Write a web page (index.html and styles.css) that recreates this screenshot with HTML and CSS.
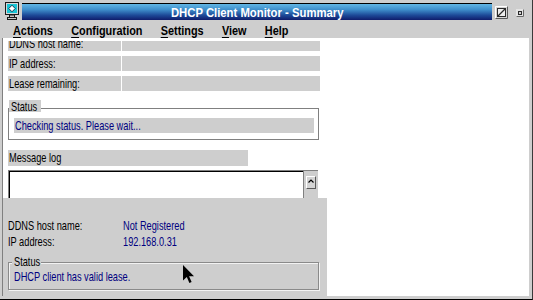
FILE: index.html
```html
<!DOCTYPE html>
<html lang="en">
<head>
    <meta charset="UTF-8">
    <title>DHCP Client Monitor - Summary</title>
    <link rel="stylesheet" href="styles.css">
</head>
<body>
    <div class="window">
        <div class="titlebar">
            <svg class="sys-icon" width="14" height="18" viewBox="0 0 14 18">
                <rect x="0.5" y="0.5" width="13" height="12" fill="#d6d6d6" stroke="#1a1a1a"/>
                <rect x="2" y="2" width="10" height="9" fill="#18c4d4"/>
                <path d="M7 3.2 L10.2 6.5 L7 9.8 L3.8 6.5 Z" fill="#fff" stroke="#0c3048" stroke-width="0.9"/>
                <rect x="4.5" y="13" width="5" height="3" fill="#c8c8c8" stroke="#1a1a1a"/>
                <rect x="2.5" y="15.5" width="9" height="2" fill="#c8c8c8" stroke="#1a1a1a"/>
            </svg>
            <div class="caption"><span>DHCP Client Monitor - Summary</span></div>
            <svg class="btn-max" width="13" height="13" viewBox="0 0 13 13">
                <rect width="13" height="13" fill="#d4d4d4"/>
                <path d="M0.5 12.5 V0.5 H12.5" fill="none" stroke="#fff"/>
                <path d="M0.5 12.5 H12.5 V0.5" fill="none" stroke="#5a5a5a"/>
                <rect x="2.5" y="2.5" width="8" height="8" fill="#eeeeee" stroke="#2a2a2a"/>
                <line x1="3" y1="10" x2="10" y2="3" stroke="#2a2a2a" stroke-width="1.3"/>
            </svg>
            <svg class="btn-restore" width="8" height="8" viewBox="0 0 8 8">
                <rect width="8" height="8" fill="#e4e4e4"/>
                <path d="M0.5 7.5 H7.5 V0.5" fill="none" stroke="#6a6a6a"/>
                <rect x="2.5" y="2.5" width="3" height="3" fill="#d0d0d0" stroke="#2a2a2a"/>
            </svg>
        </div>

        <div class="menubar">
            <div class="menu-items">
                <span><u>A</u>ctions</span>
                <span><u>C</u>onfiguration</span>
                <span><u>S</u>ettings</span>
                <span><u>V</u>iew</span>
                <span><u>H</u>elp</span>
            </div>
        </div>

        <div class="client">
            <div class="form">
                <div class="fields">
                    <div class="field-row">
                        <div class="field-label"><span class="t">DDNS host name:</span></div>
                        <div class="field-value"></div>
                    </div>
                    <div class="field-row">
                        <div class="field-label"><span class="t">IP address:</span></div>
                        <div class="field-value"></div>
                    </div>
                    <div class="field-row">
                        <div class="field-label"><span class="t">Lease remaining:</span></div>
                        <div class="field-value"></div>
                    </div>
                </div>

                <div class="group">
                    <div class="group-title"><span class="t">Status</span></div>
                    <div class="group-box">
                        <div class="status-line"><span class="t">Checking status. Please wait...</span></div>
                    </div>
                </div>

                <div class="log-label"><span class="t">Message log</span></div>
                <div class="log-box">
                    <div class="log-text"></div>
                    <div class="vscroll">
                        <div class="arrow-up">
                            <svg width="6" height="4" viewBox="0 0 6 4"><path d="M0.5 3.5 L3 1 L5.5 3.5" fill="none" stroke="#000" stroke-width="1.2"/></svg>
                        </div>
                    </div>
                </div>
            </div>

            <!-- summary popup sits over the main form -->
            <div class="summary">
                <dl class="info">
                    <dt><span class="t">DDNS host name:</span></dt>
                    <dd><span class="t">Not Registered</span></dd>
                    <dt><span class="t">IP address:</span></dt>
                    <dd><span class="t">192.168.0.31</span></dd>
                </dl>
                <div class="group">
                    <div class="group-title"><span class="t">Status</span></div>
                    <div class="group-box">
                        <div class="status-line"><span class="t">DHCP client has valid lease.</span></div>
                    </div>
                </div>
            </div>

            <svg class="pointer" width="12" height="19" viewBox="0 0 12 19">
                <path d="M0 0 V15.5 L3.8 12 L6.4 18 L8.6 17 L6.1 11.2 H11 Z" fill="#000"/>
            </svg>
        </div>
    </div>
</body>
</html>
```

FILE: styles.css
```css
* { box-sizing: border-box; }

body { margin: 0; font-family: "Liberation Sans", Arial, sans-serif; font-size: 13px; color: #000; background: #fff; }

/* narrow system font look */
.t { display: inline-block; white-space: nowrap; transform: scaleX(.71); transform-origin: 0 50%; }

.window {
    width: 533px;
    height: 300px;
    display: flex;
    flex-direction: column;
    background: #cecece;
    border-right: 1px solid #3a3a3a;
    border-bottom: 1px solid #000;
}

/* title bar */
.titlebar { display: flex; height: 21px; flex: none; }
.sys-icon { margin: 2px 0 0 5px; flex: none; }
.caption {
    width: 470px;
    height: 17px;
    margin: 3px 0 0 3px;
    padding-top: 1px;
    border-top: 1px solid #000;
    background: linear-gradient(#62b6e4, #3f8fcc 35%, #1d4a98 70%, #0f1c6c);
    color: #fff;
    font-size: 13px;
    font-weight: bold;
    line-height: 15px;
    text-align: center;
}
.caption span { display: inline-block; white-space: nowrap; transform: scaleX(.87); }
.btn-max { margin: 6px 0 0 3px; flex: none; }
.btn-restore { margin: 9px 0 0 8px; flex: none; }

/* menu */
.menubar { height: 17px; flex: none; padding: 3px 0 0 13px; font-size: 12.5px; font-weight: bold; line-height: 14px; }
.menu-items { display: flex; gap: 21px; transform: scaleX(.87); transform-origin: 0 0; white-space: nowrap; }
.menu-items u { text-decoration-thickness: 1px; text-underline-offset: 2px; }

/* client area */
.client {
    flex: 1;
    position: relative;
    margin: 0 3px 3px 2px;
    border-left: 1px solid #808080;
    background: #fff;
    overflow: hidden;
}

.form { width: 322px; padding: 3px 0 0 5px; }
.fields { overflow: hidden; }
.field-row { display: flex; gap: 1px; height: 15px; margin-bottom: 5px; line-height: 15px; }
.field-row:first-child { margin-top: -5px; }
.field-row:last-child { margin-bottom: 0; }
.field-label { width: 113px; padding-left: 1px; background: #cecece; }
.field-value { width: 198px; background: #cecece; }

.group { margin-top: 9px; }
.group-title {
    position: relative;
    width: 32px;
    height: 12px;
    margin: 0 0 -4px 1px;
    padding-left: 2px;
    background: #cecece;
    line-height: 14px;
}
.group-box { width: 311px; border: 1px solid #808080; padding: 9px 4px 6px 5px; }
.status-line { height: 15px; padding-left: 1px; background: #cecece; color: #000080; line-height: 15px; }

.log-label { width: 240px; height: 16px; margin-top: 10px; padding-left: 1px; background: #cecece; line-height: 16px; }
.log-box { display: flex; width: 310px; height: 40px; margin-top: 4px; border-top: 1px solid #808080; }
.log-text { flex: 1; border-left: 1px solid #808080; box-shadow: inset 1px 1px 0 #000; background: #fff; }
.vscroll { width: 15px; padding: 5px 0 0 2px; border-left: 1px solid #808080; background: #cecece; }
.arrow-up {
    width: 10px;
    height: 13px;
    display: flex;
    justify-content: center;
    padding-top: 2px;
    border: 1px solid;
    border-color: #fff #5a5a5a #5a5a5a #fff;
    background: #d4d4d4;
}

/* summary popup */
.summary {
    position: absolute;
    left: 0;
    top: 160px;
    bottom: 0;
    width: 324px;
    padding: 20px 0 0 5px;
    background: #cecece;
}
.info { display: grid; grid-template-columns: 115px auto; margin: 0; line-height: 16px; }
.info dt, .info dd { margin: 0; }
.info dd { color: #000080; }
.summary .group { margin-top: 5px; }
.summary .group-title { width: 29px; margin: 0 0 -5px 4px; }
.summary .group-box {
    border-color: #8a8a8a;
    padding: 6px 0 5px 5px;
    box-shadow: inset 1px 1px 0 #f2f2f2, 1px 1px 0 #f2f2f2;
}
.summary .status-line { padding-left: 0; background: none; }

.pointer { position: absolute; left: 180px; top: 227px; }
```
